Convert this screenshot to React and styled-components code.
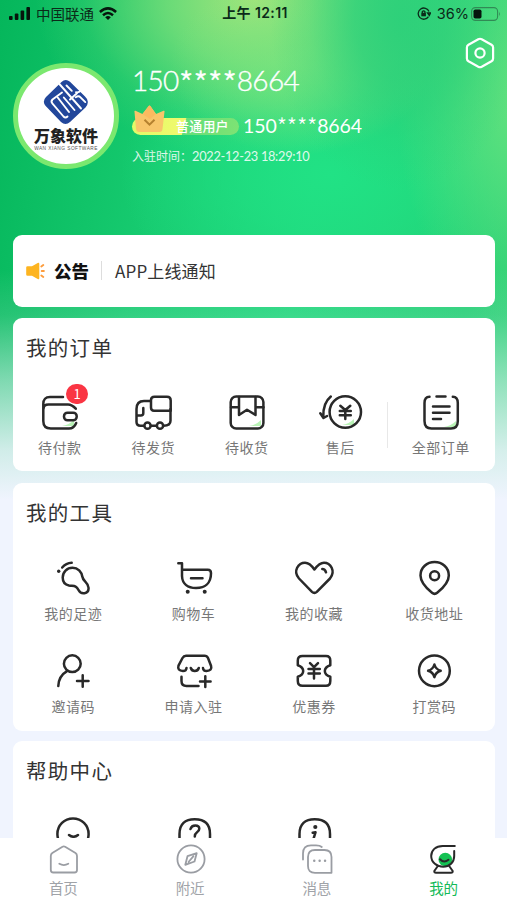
import React from 'react'
import styled, { createGlobalStyle, css } from 'styled-components'

const GlobalStyle = createGlobalStyle`
  * {
    box-sizing: border-box;
  }

  body {
    margin: 0;
    font-family: 'Noto Sans CJK SC', sans-serif;
    color: #333;
  }
`

const Screen = styled.div`
  display: flex;
  flex-direction: column;
  width: 507px;
  height: 900px;
  overflow: hidden;
  background:
    linear-gradient(to bottom, rgba(240, 244, 254, 0) 270px, rgba(240, 244, 254, 0.12) 315px, rgba(240, 244, 254, 0.5) 380px, rgba(240, 244, 254, 0.86) 450px, #f0f4fe 500px),
    radial-gradient(ellipse 130px 170px at 400px 20px, rgba(45, 208, 122, 0.95) 0, rgba(45, 208, 122, 0.75) 35%, rgba(45, 208, 122, 0.25) 70%, rgba(45, 208, 122, 0) 100%),
    radial-gradient(ellipse 130px 90px at 300px 65px, rgba(130, 230, 128, 0.6) 0, rgba(130, 230, 128, 0.35) 50%, rgba(130, 230, 128, 0) 100%),
    radial-gradient(ellipse 220px 160px at 255px 0, #a2e47b 0, rgba(150, 228, 124, 0.65) 40%, rgba(140, 228, 124, 0.15) 78%, rgba(150, 228, 124, 0) 100%),
    radial-gradient(ellipse 130px 240px at 525px 90px, #68e37f 0, rgba(100, 226, 128, 0.6) 45%, rgba(95, 225, 128, 0) 100%),
    radial-gradient(ellipse 210px 140px at 330px 175px, #21e285 0, rgba(33, 226, 133, 0.6) 45%, rgba(33, 226, 133, 0) 100%),
    linear-gradient(100deg, #05b65b 0%, #17cb70 28%, #20d67b 52%, #23cf74 78%, #3cd078 100%);
`

const StatusBar = styled.div`
  display: grid;
  grid-template-columns: 1fr auto 1fr;
  align-items: center;
  height: 27px;
  flex: none;
  padding: 0 6px 0 9px;
  color: #0b2a19;
  font-size: 14.5px;
`

const StatusGroup = styled.div`
  display: flex;
  align-items: center;
  justify-content: ${props => (props.end ? 'flex-end' : 'flex-start')};
  gap: ${props => (props.end ? '2px' : '5px')};
  font-family: Inter, 'Noto Sans CJK SC', sans-serif;
`

const Clock = styled.div`
  font-family: Inter, 'Noto Sans CJK SC', sans-serif;
  font-size: 14px;
  font-weight: 600;
  letter-spacing: 0.4px;
  line-height: 20px;
  margin-top: -2px;
`

const Content = styled.div`
  flex: 1;
  min-height: 0;
  overflow: hidden;
  padding: 0 12.5px 0 13px;
`

const Header = styled.header`
  display: flex;
  height: 207.5px;
  padding-top: 36px;
`

const Avatar = styled.div`
  display: flex;
  flex-direction: column;
  align-items: center;
  flex: none;
  width: 106px;
  height: 106px;
  padding-top: 11px;
  border: 5px solid #7be86f;
  border-radius: 50%;
  background: white;
`

const LogoName = styled.div`
  margin-top: 1px;
  color: #222;
  font-size: 16px;
  font-weight: 900;
  line-height: 19px;
`

const LogoSub = styled.div`
  margin-top: 1px;
  color: #555;
  font-family: 'Liberation Sans', sans-serif;
  font-size: 4.8px;
  line-height: 6px;
  letter-spacing: 0.45px;
  white-space: nowrap;
`

const Info = styled.div`
  flex: 1;
  margin-left: 13px;
  color: white;
`

const Phone = styled.div`
  display: flex;
  align-items: center;
  height: ${props => (props.large ? '34px' : '24px')};
  font-family: Lato, 'Noto Sans CJK SC', sans-serif;
  font-size: ${props => (props.large ? '28px' : '19.5px')};
  font-weight: ${props => (props.large ? 300 : 400)};
  letter-spacing: ${props => (props.large ? '-0.7px' : '-0.1px')};
  -webkit-text-stroke: ${props => (props.large ? '0.35px white' : '0')};
`

const Stars = styled.span`
  font-family: 'Noto Sans CJK SC', sans-serif;
  font-size: 1.2em;
  font-weight: 300;
  line-height: 1;
  letter-spacing: -0.01em;
  transform: translateY(0.1em);
`

const LevelRow = styled.div`
  display: flex;
  align-items: center;
  margin-top: 16px;
`

const Level = styled.div`
  position: relative;
  width: 107px;
  height: 17px;
  margin: 3px 4px 0 0;
  padding-left: 44px;
  border-radius: 9px;
  background: linear-gradient(105deg, #e0fa68 0, #f1f96d 52px, #63de78 53px, #7fe374 100%);
  font-size: 13px;
  font-weight: 500;
  line-height: 16px;
  letter-spacing: 0.2px;
  white-space: nowrap;
`

const CrownSvg = styled.svg`
  position: absolute;
  left: 1px;
  top: -13px;
`

const Joined = styled.div`
  margin-top: 8px;
  font-family: Lato, 'Noto Sans CJK SC', sans-serif;
  font-size: 12.8px;
  line-height: 22px;
  letter-spacing: -0.3px;
  opacity: 0.85;

  span {
    font-size: 12px;
    letter-spacing: 0;
  }
`

const Settings = styled.div`
  flex: none;
  width: 30px;
  height: 32px;
  margin-top: -26px;
`

const Card = styled.section`
  height: ${props => props.height}px;
  margin-bottom: ${props => props.gap || 10.5}px;
  padding-top: 13px;
  border-radius: 9px;
  background: white;
`

const Notice = styled(Card)`
  display: flex;
  align-items: center;
  padding: 0 13px;
`

const NoticeTitle = styled.strong`
  margin-left: 8px;
  color: #111;
  font-size: 17.5px;
  font-weight: 900;
`

const NoticeText = styled.span`
  margin-left: 12px;
  padding-left: 13px;
  border-left: 1px solid #ddd;
  font-size: 17px;
  line-height: 19px;
  letter-spacing: 0.15px;
`

const Title = styled.h2`
  margin: 0 0 0 13px;
  font-size: 20.5px;
  font-weight: 400;
  line-height: 32px;
  letter-spacing: 1.3px;
`

const Grid = styled.div`
  display: grid;
  grid-template-columns: ${props => props.columns || 'repeat(4, 1fr)'};
  grid-auto-rows: 93px;
  padding-top: ${props => props.top}px;
`

const Entry = styled.div`
  position: relative;
  display: flex;
  flex-direction: column;
  align-items: center;
  color: #777;
  font-size: 14px;
  line-height: 22px;
  letter-spacing: 0.5px;

  svg {
    margin-bottom: 4px;
    color: #292929;
  }

  ${props =>
    props.divided &&
    css`
      &::before {
        content: '';
        position: absolute;
        left: 0;
        top: 10px;
        height: 46px;
        border-left: 1px solid #e8e8e8;
      }
    `}
`

const Count = styled.span`
  position: absolute;
  left: 53px;
  top: -8px;
  width: 22px;
  height: 20px;
  border-radius: 10px;
  background: #fa3543;
  color: white;
  font-size: 13px;
  line-height: 19px;
  letter-spacing: 0;
  text-align: center;
`

const TabBar = styled.nav`
  display: grid;
  grid-template-columns: repeat(4, 1fr);
  flex: none;
  height: 62px;
  padding-top: 6px;
  background: white;
`

const Tab = styled.div`
  display: flex;
  flex-direction: column;
  align-items: center;
  color: ${props => (props.active ? '#14ba58' : '#a0a3a8')};
  font-size: 14.5px;
  line-height: 20px;

  svg {
    margin: 0 0 2px 1px;
    color: ${props => (props.active ? '#292929' : '#9a9da3')};
  }
`

const Icon = ({ size = 40, width = 2.5, children }) => (
  <svg
    width={size}
    height={size}
    viewBox={`0 0 ${size} ${size}`}
    fill="none"
    stroke="currentColor"
    strokeWidth={width}
    strokeLinecap="round"
    strokeLinejoin="round"
    overflow="visible"
  >
    {children}
  </svg>
)

const Glow = ({ x = 34, y = 34 }) => (
  <path d={`M${x} ${y - 6}v6h-12q7-1 12-6z`} fill="#b9f3b6" stroke="none" />
)

const icons = {
  wallet: (
    <Icon>
      <Glow />
      <path d="M23 5H10Q3.3 5 3.3 12V29q0 7.5 7.5 7.5H29q5 0 7.2-5.5M3.5 17q0-4.5 5-4.5H28q4 0 7.8 4.2" />
      <rect x="24" y="20.7" width="12.7" height="7.6" rx="3.5" />
    </Icon>
  ),
  truck: (
    <Icon>
      <path d="M17.8 9H11Q3.5 9 3.5 17V30q0 3.7 4 3.7h3.5M18 33.7h5.7M30.5 33.7q7 0 7-5V17M10.3 16v5q0 2.5-2.5 2.5H3.7" />
      <path d="M21.5 4.7H34q3.7 0 3.7 3.7V18.7H21q-3 0-3-3.2V8q0-3.3 3.5-3.3z" />
      <circle cx="14.5" cy="33.7" r="3.1" />
      <circle cx="27" cy="33.7" r="3.1" />
    </Icon>
  ),
  box: (
    <Icon>
      <Glow />
      <rect x="3.7" y="4.5" width="32.7" height="32" rx="5.5" />
      <path d="M4 15.3h8M28.5 15.3h8M12 5v18l8-5.2 8.5 5.2V5" />
    </Icon>
  ),
  refund: (
    <Icon>
      <Glow x={34} y={33} />
      <circle cx="25.3" cy="20" r="15.7" />
      <path d="M10.8 4.5Q2.8 11 3.3 25M.3 21.2L3.5 26l3.6-2M20.3 13.7l5 4.3 5-4.3M19.8 19h11M19.8 23.2h11M25.3 18v9" />
    </Icon>
  ),
  list: (
    <Icon>
      <Glow x={35} y={35} />
      <path d="M8.5 4.8Q3.5 5 3.5 11V29q0 7.5 7 7.5H30q6.8 0 6.8-7.5V11q0-6-5-6.2M15.5 4.6h9M12 14.5h16.5M12 20.8h16.5M12 27h8" />
    </Icon>
  ),
  foot: (
    <Icon>
      <path d="M19.5 9.7C25 9.7 28.5 14 29.3 18.5C30 24 35.6 24 35.6 30C35.6 36.3 28 37 25.5 32C23 27.2 21 28.3 16 27.5C12 26.7 9.7 23.5 9.7 19.5C9.7 14 14 9.7 19.5 9.7zM9.2 9.5Q13 5 18.7 4.8" />
      <circle cx="5.7" cy="13.3" r="1.7" fill="currentColor" stroke="none" />
    </Icon>
  ),
  cart: (
    <Icon>
      <path d="M4.3 5.2H8V18C8.3 26 14 30 22 30C31 30 37 25 37 15.2Q37 11.8 33.8 11.8H8M17 20.2h11.5" />
      <circle cx="13.7" cy="33.8" r="2" fill="currentColor" stroke="none" />
      <circle cx="30.7" cy="33.8" r="2" fill="currentColor" stroke="none" />
    </Icon>
  ),
  heart: (
    <Icon>
      <path d="M18 33.8L5 20.5C-1.5 13 4.5 4.7 11 4.7C15.5 4.7 18 8 20.4 11.5C23 8 25.5 4.7 30 4.7C36.5 4.7 42 13 36 20.5L22.8 33.8Q20.4 36 18 33.8zM28.3 11Q31 11 32 14.3" />
    </Icon>
  ),
  pin: (
    <Icon>
      <path d="M18 34.8Q6.5 25.5 6.5 17.5C6.5 9.5 13 4 20.6 4S34.8 9.5 34.8 17.5Q34.8 25.5 23.2 34.8Q20.6 37 18 34.8z" />
      <circle cx="20.6" cy="17.7" r="4.5" />
    </Icon>
  ),
  invite: (
    <Icon>
      <circle cx="19.3" cy="12.7" r="8.4" />
      <path d="M14 20.2Q5.8 25 5.3 35M29.7 24.3v11.5M24 30h11.5" />
    </Icon>
  ),
  store: (
    <Icon>
      <path d="M9 20Q3 19.7 4.5 14.7L8.5 7Q9.7 4.8 12 4.8H30.5Q33 4.8 34 7L37 14.7Q38.5 19.7 32.5 20M9 20q3.3 0 3.5-3M32.5 20q-3.3 0-3.5-3M16.8 17q1 3 4 3t4-3M7.5 25.7V30q0 5 5 5H24.5M31.3 25.2V36M26 30.6h10.6" />
    </Icon>
  ),
  coupon: (
    <Icon>
      <path d="M8.5 5H32Q36.3 5 36.3 9.5V14.2C29 16.5 29 23.5 36.3 25.8V30Q36.3 34.8 32 34.8H8.5Q3.8 34.8 3.8 30V25.8C11 23.5 11 16.5 3.8 14.2V9.5Q3.8 5 8.5 5zM16 12.2l4 4 4-4M14.5 18h11.3M14.5 22.5h11.3M20 16.5v11" />
    </Icon>
  ),
  tip: (
    <Icon>
      <circle cx="20.4" cy="19.8" r="15.4" />
      <path d="M20.4 13.5Q21.8 18.4 26.7 19.8Q21.8 21.2 20.4 26.1Q19 21.2 14.1 19.8Q19 18.4 20.4 13.5z" />
    </Icon>
  ),
  smile: (
    <Icon>
      <circle cx="20" cy="20" r="15.6" />
      <path d="M16 21q4.5 3.5 9 0" />
    </Icon>
  ),
  question: (
    <Icon>
      <path d="M5.5 28V20C5.5 10 11 5.3 20.7 5.3S36 10 36 20V28M16.5 15q1-3.5 4.8-3.5 4 0 4 3.3 0 2-2.5 3.7-2 1.4-2 4" />
    </Icon>
  ),
  info: (
    <Icon>
      <path d="M5.5 28V20C5.5 10 11 5.3 20.7 5.3S36 10 36 20V28M18.7 18.8l2.8-.5-2 6.5" />
      <circle cx="21.3" cy="13" r="2.1" fill="currentColor" stroke="none" />
    </Icon>
  ),
  home: (
    <Icon size={32} width={1.8}>
      <path d="M14.5 2.8q1.3-.8 2.6 0L27.5 9Q29 10 29 12V26Q29 28.5 26.5 28.5H5.3Q2.8 28.5 2.8 26V12Q2.8 10 4.3 9zM11.3 19.8q4.5 2.5 9 0" />
    </Icon>
  ),
  compass: (
    <Icon size={32} width={1.8}>
      <circle cx="16" cy="15" r="13.6" />
      <path d="M21.7 9.2L19.5 17.5 10.3 20.8 12.5 12.2zM18.5 12.2L13.5 18" />
    </Icon>
  ),
  message: (
    <Icon size={32} width={1.8}>
      <path d="M2 15.5V9.5Q2 1.3 10 1.3H15Q19 1.3 20.8 3M14 6H23.5Q30.5 6 30.5 13V28.8H14Q7 28.8 7 22V13Q7 6 14 6z" />
      <path d="M13.2 16.7h.1M18.6 16.7h.1M24 16.7h.1" strokeWidth="2.4" />
    </Icon>
  ),
  mine: (
    <Icon size={32} width={2}>
      <circle cx="17.3" cy="15.5" r="6.8" fill="#14c153" stroke="none" />
      <path d="M26.8 1.9H14.7C7.5 1.9 3.2 6.5 3.2 12C3.2 18.5 9 22.7 15.2 22.7S26.2 18.3 26.2 12V7M12 15.3q4 4.2 8.5.5M9.5 22.5L6.3 27Q6 28.7 8 28.7H23Q25 28.7 24.7 27L21.5 22.5" />
    </Icon>
  ),
}

const orders = [
  { name: '待付款', icon: 'wallet', count: 1 },
  { name: '待发货', icon: 'truck' },
  { name: '待收货', icon: 'box' },
  { name: '售后', icon: 'refund' },
  { name: '全部订单', icon: 'list', divided: true },
]

const tools = [
  { name: '我的足迹', icon: 'foot' },
  { name: '购物车', icon: 'cart' },
  { name: '我的收藏', icon: 'heart' },
  { name: '收货地址', icon: 'pin' },
  { name: '邀请码', icon: 'invite' },
  { name: '申请入驻', icon: 'store' },
  { name: '优惠券', icon: 'coupon' },
  { name: '打赏码', icon: 'tip' },
]

const help = [{ icon: 'smile' }, { icon: 'question' }, { icon: 'info' }]

const tabs = [
  { name: '首页', icon: 'home' },
  { name: '附近', icon: 'compass' },
  { name: '消息', icon: 'message' },
  { name: '我的', icon: 'mine', active: true },
]

const Entries = ({ items }) =>
  items.map(({ name, icon, count, divided }) => (
    <Entry key={icon} divided={divided}>
      {icons[icon]}
      {count && <Count>{count}</Count>}
      {name}
    </Entry>
  ))

const MaskedPhone = ({ large }) => (
  <Phone large={large}>
    150<Stars>****</Stars>8664
  </Phone>
)

const Signal = () => (
  <svg width="22" height="13" viewBox="0 0 22 13" fill="#06150d">
    <rect x="0" y="9" width="3.6" height="4" rx="1" />
    <rect x="5.8" y="6.5" width="3.6" height="6.5" rx="1" />
    <rect x="11.6" y="3.5" width="3.6" height="9.5" rx="1" />
    <rect x="17.4" y="0" width="3.6" height="13" rx="1" />
  </svg>
)

const Wifi = () => (
  <svg width="18" height="13" viewBox="0 0 18 13" fill="none" stroke="#06150d" strokeWidth="2.5">
    <path d="M.9 5Q9-2.3 17.1 5M4 8.2q5-4.3 10 0" />
    <path d="M9 13L6.2 10.2q2.8-2.3 5.6 0z" fill="#06150d" stroke="none" />
  </svg>
)

const RotationLock = () => (
  <svg width="14" height="13" viewBox="0 0 14 13" fill="none" stroke="#0b2a19" strokeWidth="1.3">
    <path d="M11.5 9.7A5.6 5.6 0 1 1 12 4.5M10.5 6h3l-1.2 2.5z" />
    <rect x="4.3" y="5.8" width="4.6" height="3.5" fill="#0b2a19" stroke="none" />
    <path d="M5.3 6V4.6q1.3-1.6 2.6 0V6" />
  </svg>
)

const Battery = () => (
  <svg width="30" height="14" viewBox="0 0 30 14">
    <rect x=".6" y=".6" width="26" height="12.8" rx="3.8" fill="none" stroke="#318a55" strokeWidth="1.1" />
    <rect x="2.5" y="2.5" width="8" height="9" rx="1.8" fill="#06150d" />
    <path d="M28 4.7q1.8 2.3 0 4.6z" fill="#318a55" />
  </svg>
)

const Logo = () => (
  <svg width="46" height="46" viewBox="0 0 46 46" fill="none" stroke="white" strokeWidth="1.9" strokeLinecap="round" strokeLinejoin="round">
    <path
      d="M18.5 3Q22.5-.8 27 2.7L42 17.5Q47.5 22.5 42.5 28.5L27 43Q22.5 47 18 43L2.7 27Q-1.2 22.5 3 18z"
      fill="#22479b"
      stroke="none"
    />
    <path d="M15.5 4L38 29.5M19 13.5L9.5 20.5Q7.5 22.5 9.5 24.7L20.5 37.5Q22.5 39.5 24.5 37.5" />
    <path d="M14.7 18.5L26 33M20.8 18.5L31.5 31" />
    <path d="M23.5 6.5l5.3 5.3M32.7 18.3q2.8-2 4.8 0l4.8 4.8" />
    <path d="M38 10.5q-1.5 3.5-5 2.8M27 20.5l7.5-6.8" />
  </svg>
)

const Crown = () => (
  <CrownSvg width="33" height="28" viewBox="0 0 33 28">
    <path d="M1.5 6.7q-.5-1.3 1-1L9.5 9 15.5 1.2q1-1.2 2 0L23 9l7.5-3.3q1.5-.3 1 1L29.5 24q-.3 3-3 3H6q-2.5 0-3-3z" fill="#f8c56a" />
    <path d="M9.5 9l6-7.8q1-1.2 2 0L23 9l-6 5z" fill="#fbba60" />
    <path d="M11.5 14.7l5 5 5-5" fill="none" stroke="#b5812f" strokeWidth="2" />
  </CrownSvg>
)

const Horn = () => (
  <svg width="20" height="18" viewBox="0 0 20 18">
    <path d="M1.5 4.3H6L11.7 1q1.6-.7 1.6 1v14q0 1.7-1.6 1L6 13.7H1.5Q.2 13.7.2 12.4V5.6Q.2 4.3 1.5 4.3z" fill="#fdb420" />
    <path d="M15.3 4.5l2-1.5M15.7 9h2.2M15.3 13.5l2 1.5" stroke="#fd9c3c" strokeWidth="1.9" strokeLinecap="round" />
  </svg>
)

const App = () => (
  <Screen>
    <GlobalStyle />
    <StatusBar>
      <StatusGroup>
        <Signal />
        中国联通
        <Wifi />
      </StatusGroup>
      <Clock>上午 12:11</Clock>
      <StatusGroup end>
        <RotationLock />
        <span>&nbsp;36%</span>
        <Battery />
      </StatusGroup>
    </StatusBar>

    <Content>
      <Header>
        <Avatar>
          <Logo />
          <LogoName>万象软件</LogoName>
          <LogoSub>WAN XIANG SOFTWARE</LogoSub>
        </Avatar>
        <Info>
          <MaskedPhone large />
          <LevelRow>
            <Level>
              <Crown />
              普通用户
            </Level>
            <MaskedPhone />
          </LevelRow>
          <Joined>
            <span>入驻时间：</span>2022-12-23 18:29:10
          </Joined>
        </Info>
        <Settings>
          <svg width="30" height="32" viewBox="0 0 30 32" fill="none" stroke="white" strokeWidth="2.2" strokeLinejoin="round">
            <path d="M13.3 2.2q1.7-.9 3.4 0l9.8 5.5q1.6 1 1.6 2.8v11q0 1.8-1.6 2.8l-9.8 5.5q-1.7.9-3.4 0l-9.8-5.5q-1.6-1-1.6-2.8v-11q0-1.8 1.6-2.8z" />
            <circle cx="15" cy="16" r="4.6" />
          </svg>
        </Settings>
      </Header>

      <Notice height={72.5}>
        <Horn />
        <NoticeTitle>公告</NoticeTitle>
        <NoticeText>APP上线通知</NoticeText>
      </Notice>

      <Card height={153.5} gap={12}>
        <Title>我的订单</Title>
        <Grid columns="repeat(4, 93.5px) 1fr" top={29}>
          <Entries items={orders} />
        </Grid>
      </Card>

      <Card height={247.5}>
        <Title>我的工具</Title>
        <Grid top={30}>
          <Entries items={tools} />
        </Grid>
      </Card>

      <Card height={200}>
        <Title>帮助中心</Title>
        <Grid top={28}>
          <Entries items={help} />
        </Grid>
      </Card>
    </Content>

    <TabBar>
      {tabs.map(({ name, icon, active }) => (
        <Tab key={icon} active={active}>
          {icons[icon]}
          {name}
        </Tab>
      ))}
    </TabBar>
  </Screen>
)

export default App
